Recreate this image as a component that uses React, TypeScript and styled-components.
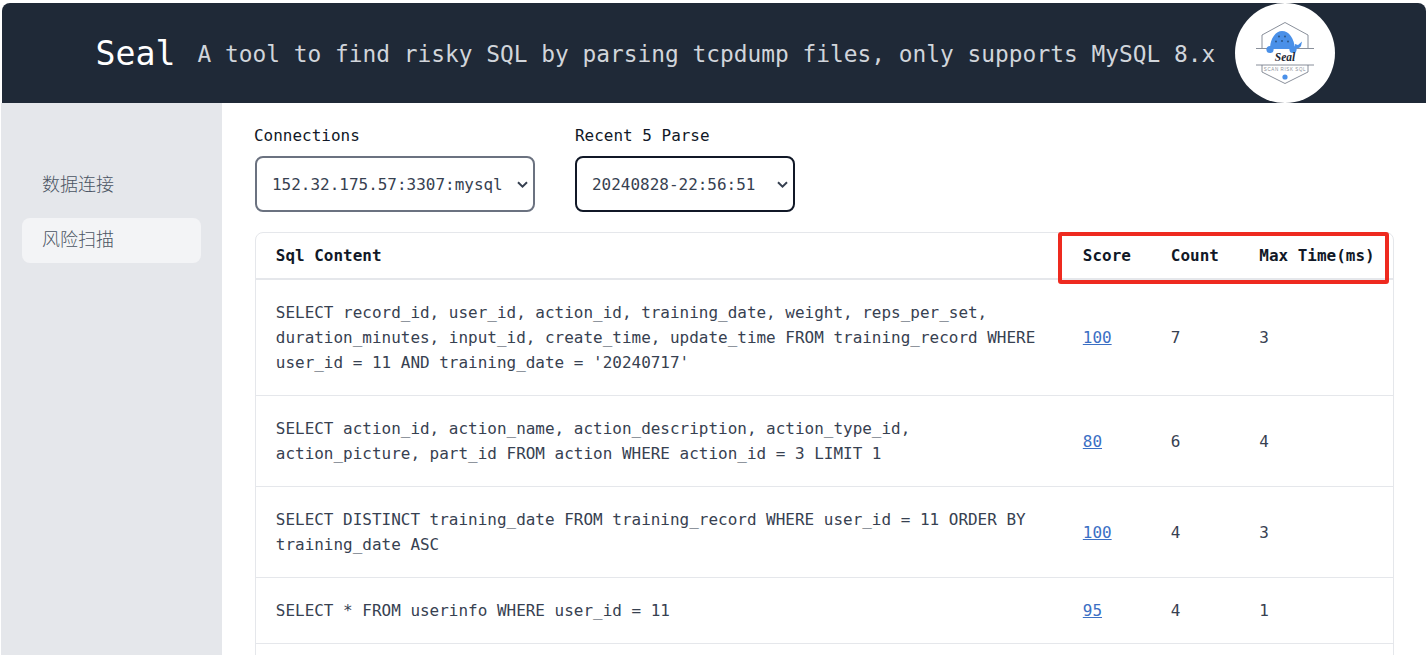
import React from "react";
import styled, { createGlobalStyle } from "styled-components";

const Global = createGlobalStyle`
  html, body { margin: 0; padding: 0; height: 100%; background: #fff; overflow: hidden; }
  * { box-sizing: border-box; }
`;

const Page = styled.div`
  width: 1426px;
  height: 655px;
  overflow: hidden;
  padding: 3px 0 0 1px;
  font-family: "DejaVu Sans Mono", "Noto Sans CJK SC", monospace;
  font-size: 15.97px;
  position: relative;
`;

const Header = styled.header`
  height: 100px;
  margin-left: 1px;
  background: #1f2937;
  border-radius: 8px 8px 0 0;
  display: flex;
  align-items: center;
  padding-left: 93.5px;
`;

const Title = styled.h1`
  margin: 0 22px 0 0;
  color: #fff;
  font-size: 33.2px;
  font-weight: 400;
`;

const Tagline = styled.span`
  color: #d1d5db;
  font-size: 22.85px;
  margin-right: 20px;
  padding-top: 2px;
  white-space: nowrap;
`;

const LogoDisc = styled.div`
  width: 100px;
  height: 100px;
  border-radius: 50%;
  background: #fff;
  flex: none;
  display: flex;
  align-items: center;
  justify-content: center;
`;

const Body = styled.div`
  display: flex;
  height: 552px;
`;

const Sidebar = styled.nav`
  width: 221px;
  flex: none;
  background: #e5e7eb;
  padding: 60px 21px 0;
  display: flex;
  flex-direction: column;
  gap: 10px;
`;

const NavItem = styled.a<{ $active?: boolean }>`
  width: 179px;
  height: 45px;
  padding: 0 0 6px 20px;
  display: flex;
  align-items: center;
  border-radius: 8px;
  color: #4b5563;
  font-family: "Noto Sans CJK SC", sans-serif;
  font-size: 18px;
  font-weight: 300;
  background: ${(p) => (p.$active ? "#f3f4f6" : "transparent")};
`;

const Main = styled.main`
  flex: 1;
  min-width: 0;
  padding: 21px 32px 0 32px;
`;

const Filters = styled.div`
  display: flex;
  gap: 40px;
  margin-bottom: 20px;
`;

const Field = styled.label`
  display: flex;
  flex-direction: column;
  color: #111827;
  line-height: 24px;
  gap: 8px;
`;

const chevron = `url("data:image/svg+xml,%3Csvg xmlns='http://www.w3.org/2000/svg' width='11' height='7' viewBox='0 0 11 7'%3E%3Cpath d='M1 1.2 L5.5 5.6 L10 1.2' fill='none' stroke='%23374151' stroke-width='2'/%3E%3C/svg%3E")`;

const Select = styled.select<{ $width: number; $focused?: boolean }>`
  appearance: none;
  width: ${(p) => p.$width}px;
  height: 56px;
  margin-left: ${(p) => (p.$focused ? 0 : 1)}px;
  padding: 0 24px 0 15px;
  background: #fff ${chevron} no-repeat right 5px center;
  border: 2px solid ${(p) => (p.$focused ? "#111827" : "#6b7280")};
  border-radius: 8px;
  color: #374151;
  font-family: inherit;
  font-size: 15.97px;
  outline: none;
`;

const Card = styled.div`
  margin-left: 1px;
  width: 1139px;
  border: 1px solid #e5e7eb;
  border-radius: 8px;
  overflow: hidden;
`;

const Table = styled.table`
  width: 100%;
  table-layout: fixed;
  border-collapse: collapse;
`;

const HeadCell = styled.th`
  text-align: left;
  height: 46px;
  padding: 0 20px 0 19.8px;
  color: #111827;
  font-weight: 700;
  line-height: 24px;
  white-space: nowrap;
  border-bottom: 2px solid #e5e7eb;
`;

const Row = styled.tr`
  border-bottom: 1px solid #e5e7eb;
`;

const Cell = styled.td`
  padding: 20px 20px 20px 19.8px;
  color: #374151;
  line-height: 25px;
  vertical-align: middle;
`;

const ScoreLink = styled.a`
  color: #3b6fc4;
  text-decoration: underline;
`;

const Highlight = styled.div`
  position: absolute;
  left: 1058px;
  top: 232px;
  width: 331px;
  height: 52px;
  border: 4px solid #ee2a1f;
  border-radius: 3px;
  pointer-events: none;
`;

const rows = [
  { sql: "SELECT record_id, user_id, action_id, training_date, weight, reps_per_set, duration_minutes, input_id, create_time, update_time FROM training_record WHERE user_id = 11 AND training_date = '20240717'", score: 100, count: 7, max: 3 },
  { sql: "SELECT action_id, action_name, action_description, action_type_id, action_picture, part_id FROM action WHERE action_id = 3 LIMIT 1", score: 80, count: 6, max: 4 },
  { sql: "SELECT DISTINCT training_date FROM training_record WHERE user_id = 11 ORDER BY training_date ASC", score: 100, count: 4, max: 3 },
  { sql: "SELECT * FROM userinfo WHERE user_id = 11", score: 95, count: 4, max: 1 },
];

function Logo() {
  return (
    <svg width="100" height="100" viewBox="0 0 100 100" aria-label="Seal">
      <path d="M27 45 V32 L50 19.5 L73 32 V45" fill="none" stroke="#6b7280" strokeWidth="0.8" />
      <path d="M27 62 V69 L50 80.5 L73 69 V62" fill="none" stroke="#6b7280" strokeWidth="0.8" />
      <path d="M21 45.5 H79 M21 62 H79" stroke="#6b7280" strokeWidth="0.8" />
      <path d="M35 46 C35 35 41 28 47 28 C54 28 59 35 60 46 Z" fill="#4a90e8" />
      <circle cx="35" cy="46.5" r="3.6" fill="#4a90e8" />
      <circle cx="58" cy="46.5" r="3.6" fill="#4a90e8" />
      <path d="M60 45 L60 41 L63 42 L67 38.5 L66 43 C65 45 62 46 60 45 Z" fill="#4a90e8" />
      <g fill="#27507f">
        <circle cx="44" cy="33.5" r="0.9" />
        <circle cx="50" cy="33.5" r="0.9" />
        <circle cx="41" cy="38.5" r="0.9" />
        <circle cx="47" cy="38" r="0.9" />
        <circle cx="53" cy="38.5" r="0.9" />
      </g>
      <text x="50" y="58" textAnchor="middle" fontFamily="Liberation Serif, serif" fontStyle="italic" fontWeight="700" fontSize="11.5" fill="#1f2937">Seal</text>
      <text x="50" y="67.5" textAnchor="middle" fontFamily="Liberation Sans, sans-serif" fontSize="4.5" letterSpacing="0.6" fill="#8a8f98">SCAN RISK SQL</text>
      <circle cx="50" cy="74" r="2.6" fill="#4a90e8" />
    </svg>
  );
}

export default function App() {
  return (
    <Page>
      <Global />
      <Header>
        <Title>Seal</Title>
        <Tagline>A tool to find risky SQL by parsing tcpdump files, only supports MySQL 8.x</Tagline>
        <LogoDisc><Logo /></LogoDisc>
      </Header>
      <Body>
        <Sidebar>
          <NavItem>数据连接</NavItem>
          <NavItem $active>风险扫描</NavItem>
        </Sidebar>
        <Main>
          <Filters>
            <Field>
              Connections
              <Select $width={280}><option>152.32.175.57:3307:mysql</option></Select>
            </Field>
            <Field>
              Recent 5 Parse
              <Select $width={220} $focused><option>20240828-22:56:51</option></Select>
            </Field>
          </Filters>
          <Card>
            <Table>
              <colgroup>
                <col style={{ width: 807 }} />
                <col style={{ width: 88 }} />
                <col style={{ width: 88.5 }} />
                <col />
              </colgroup>
              <thead>
                <tr>
                  <HeadCell>Sql Content</HeadCell>
                  <HeadCell>Score</HeadCell>
                  <HeadCell>Count</HeadCell>
                  <HeadCell>Max Time(ms)</HeadCell>
                </tr>
              </thead>
              <tbody>
                {rows.map((r) => (
                  <Row key={r.sql}>
                    <Cell>{r.sql}</Cell>
                    <Cell><ScoreLink href="#">{r.score}</ScoreLink></Cell>
                    <Cell>{r.count}</Cell>
                    <Cell>{r.max}</Cell>
                  </Row>
                ))}
                <Row>
                  <Cell>&nbsp;</Cell>
                  <Cell />
                  <Cell />
                  <Cell />
                </Row>
              </tbody>
            </Table>
          </Card>
        </Main>
      </Body>
      <Highlight />
    </Page>
  );
}
